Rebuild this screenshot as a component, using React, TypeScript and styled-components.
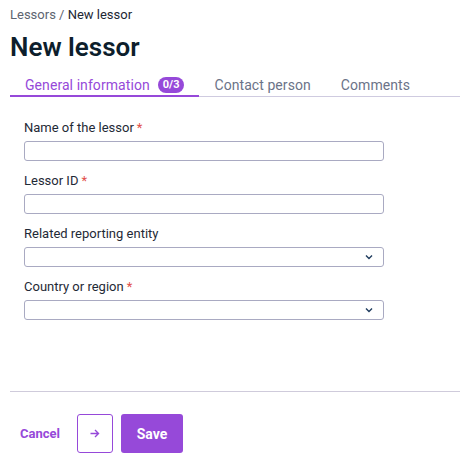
import React from "react";
import styled, { createGlobalStyle } from "styled-components";

const PURPLE = "#9649d9";

const Global = createGlobalStyle`
  html, body { margin: 0; padding: 0; background: #ffffff; }
  body { font-family: Roboto, "Noto Sans", "Liberation Sans", sans-serif; }
  * { box-sizing: border-box; }
`;

const Page = styled.div`
  width: 460px;
  height: 466px;
  padding-left: 10px;
  display: flex;
  flex-direction: column;
  overflow: hidden;
`;

const Breadcrumb = styled.div`
  padding-top: 7px;
  font-size: 13px;
  line-height: 16px;
  color: #5d6470;
`;

const Current = styled.span`
  color: #1d2733;
`;

const Title = styled.h1`
  margin: 8px 0 0;
  font-size: 26px;
  line-height: 32px;
  font-weight: 600;
  color: #0d1e2c;
`;

const TabList = styled.div`
  margin-top: 13px;
  display: flex;
  box-shadow: inset 0 -1px 0 #cfcbe0;
`;

const Tab = styled.div<{ $active?: boolean }>`
  display: flex;
  align-items: center;
  gap: 8px;
  padding: 0 15px 1px;
  font-size: 14px;
  line-height: 18px;
  letter-spacing: 0.07px;
  color: ${(p) => (p.$active ? PURPLE : "#6b7388")};
  border-bottom: 2px solid ${(p) => (p.$active ? PURPLE : "transparent")};
`;

const Badge = styled.span`
  display: inline-flex;
  align-items: center;
  justify-content: center;
  height: 16px;
  min-width: 26px;
  padding: 0 5px;
  border-radius: 8px;
  background: ${PURPLE};
  color: #fff;
  font-size: 11px;
  font-weight: 700;
  letter-spacing: 0;
`;

const Form = styled.div`
  padding: 23px 76px 71px 14px;
  display: flex;
  flex-direction: column;
  gap: 12px;
`;

const Field = styled.div`
  display: flex;
  flex-direction: column;
  gap: 5px;
`;

const Label = styled.label`
  font-size: 13px;
  line-height: 16px;
  color: #1f2a36;
`;

const Required = styled.span`
  color: #e2504a;
  margin-left: 3px;
`;

const Input = styled.div`
  position: relative;
  height: 20px;
  width: 100%;
  border: 1px solid #a9aac2;
  border-radius: 3px;
  background: #fff;
`;

const Chevron = styled.svg`
  position: absolute;
  right: 10px;
  top: 6px;
`;

const Divider = styled.div`
  height: 1px;
  background: #cfcbdb;
`;

const Footer = styled.div`
  padding-top: 22px;
  display: flex;
  align-items: center;
  gap: 8px;
`;

const TextButton = styled.button`
  height: 39px;
  padding: 0 9px 0 10px;
  border: none;
  background: transparent;
  color: ${PURPLE};
  font-family: inherit;
  font-size: 13px;
  font-weight: 700;
`;

const IconButton = styled.button`
  width: 36px;
  height: 39px;
  display: flex;
  align-items: center;
  justify-content: center;
  border: 1px solid ${PURPLE};
  border-radius: 3px;
  background: #fff;
  padding: 0;
`;

const PrimaryButton = styled.button`
  height: 39px;
  width: 62px;
  border: none;
  border-radius: 3px;
  background: ${PURPLE};
  color: #fff;
  font-family: inherit;
  font-size: 14px;
  font-weight: 700;
`;

const ChevronIcon = () => (
  <Chevron width="8" height="6" viewBox="0 0 8 6">
    <path d="M1 1.5 L4 4.5 L7 1.5" fill="none" stroke="#1f3c5e" strokeWidth="1.4" />
  </Chevron>
);

const fields: { label: string; required: boolean; select: boolean }[] = [
  { label: "Name of the lessor", required: true, select: false },
  { label: "Lessor ID", required: true, select: false },
  { label: "Related reporting entity", required: false, select: true },
  { label: "Country or region", required: true, select: true },
];

export default function App() {
  return (
    <>
      <Global />
      <Page>
        <Breadcrumb>
          Lessors / <Current>New lessor</Current>
        </Breadcrumb>
        <Title>New lessor</Title>
        <TabList>
          <Tab $active>
            General information <Badge>0/3</Badge>
          </Tab>
          <Tab>Contact person</Tab>
          <Tab>Comments</Tab>
        </TabList>
        <Form>
          {fields.map((f) => (
            <Field key={f.label}>
              <Label>
                {f.label}
                {f.required && <Required>*</Required>}
              </Label>
              <Input>{f.select && <ChevronIcon />}</Input>
            </Field>
          ))}
        </Form>
        <Divider />
        <Footer>
          <TextButton>Cancel</TextButton>
          <IconButton>
            <svg width="10" height="9" viewBox="0 0 10 9">
              <path d="M0.5 4.5 H8.5 M5 1 L8.5 4.5 L5 8" fill="none" stroke={PURPLE} strokeWidth="1.4" />
            </svg>
          </IconButton>
          <PrimaryButton>Save</PrimaryButton>
        </Footer>
      </Page>
    </>
  );
}
